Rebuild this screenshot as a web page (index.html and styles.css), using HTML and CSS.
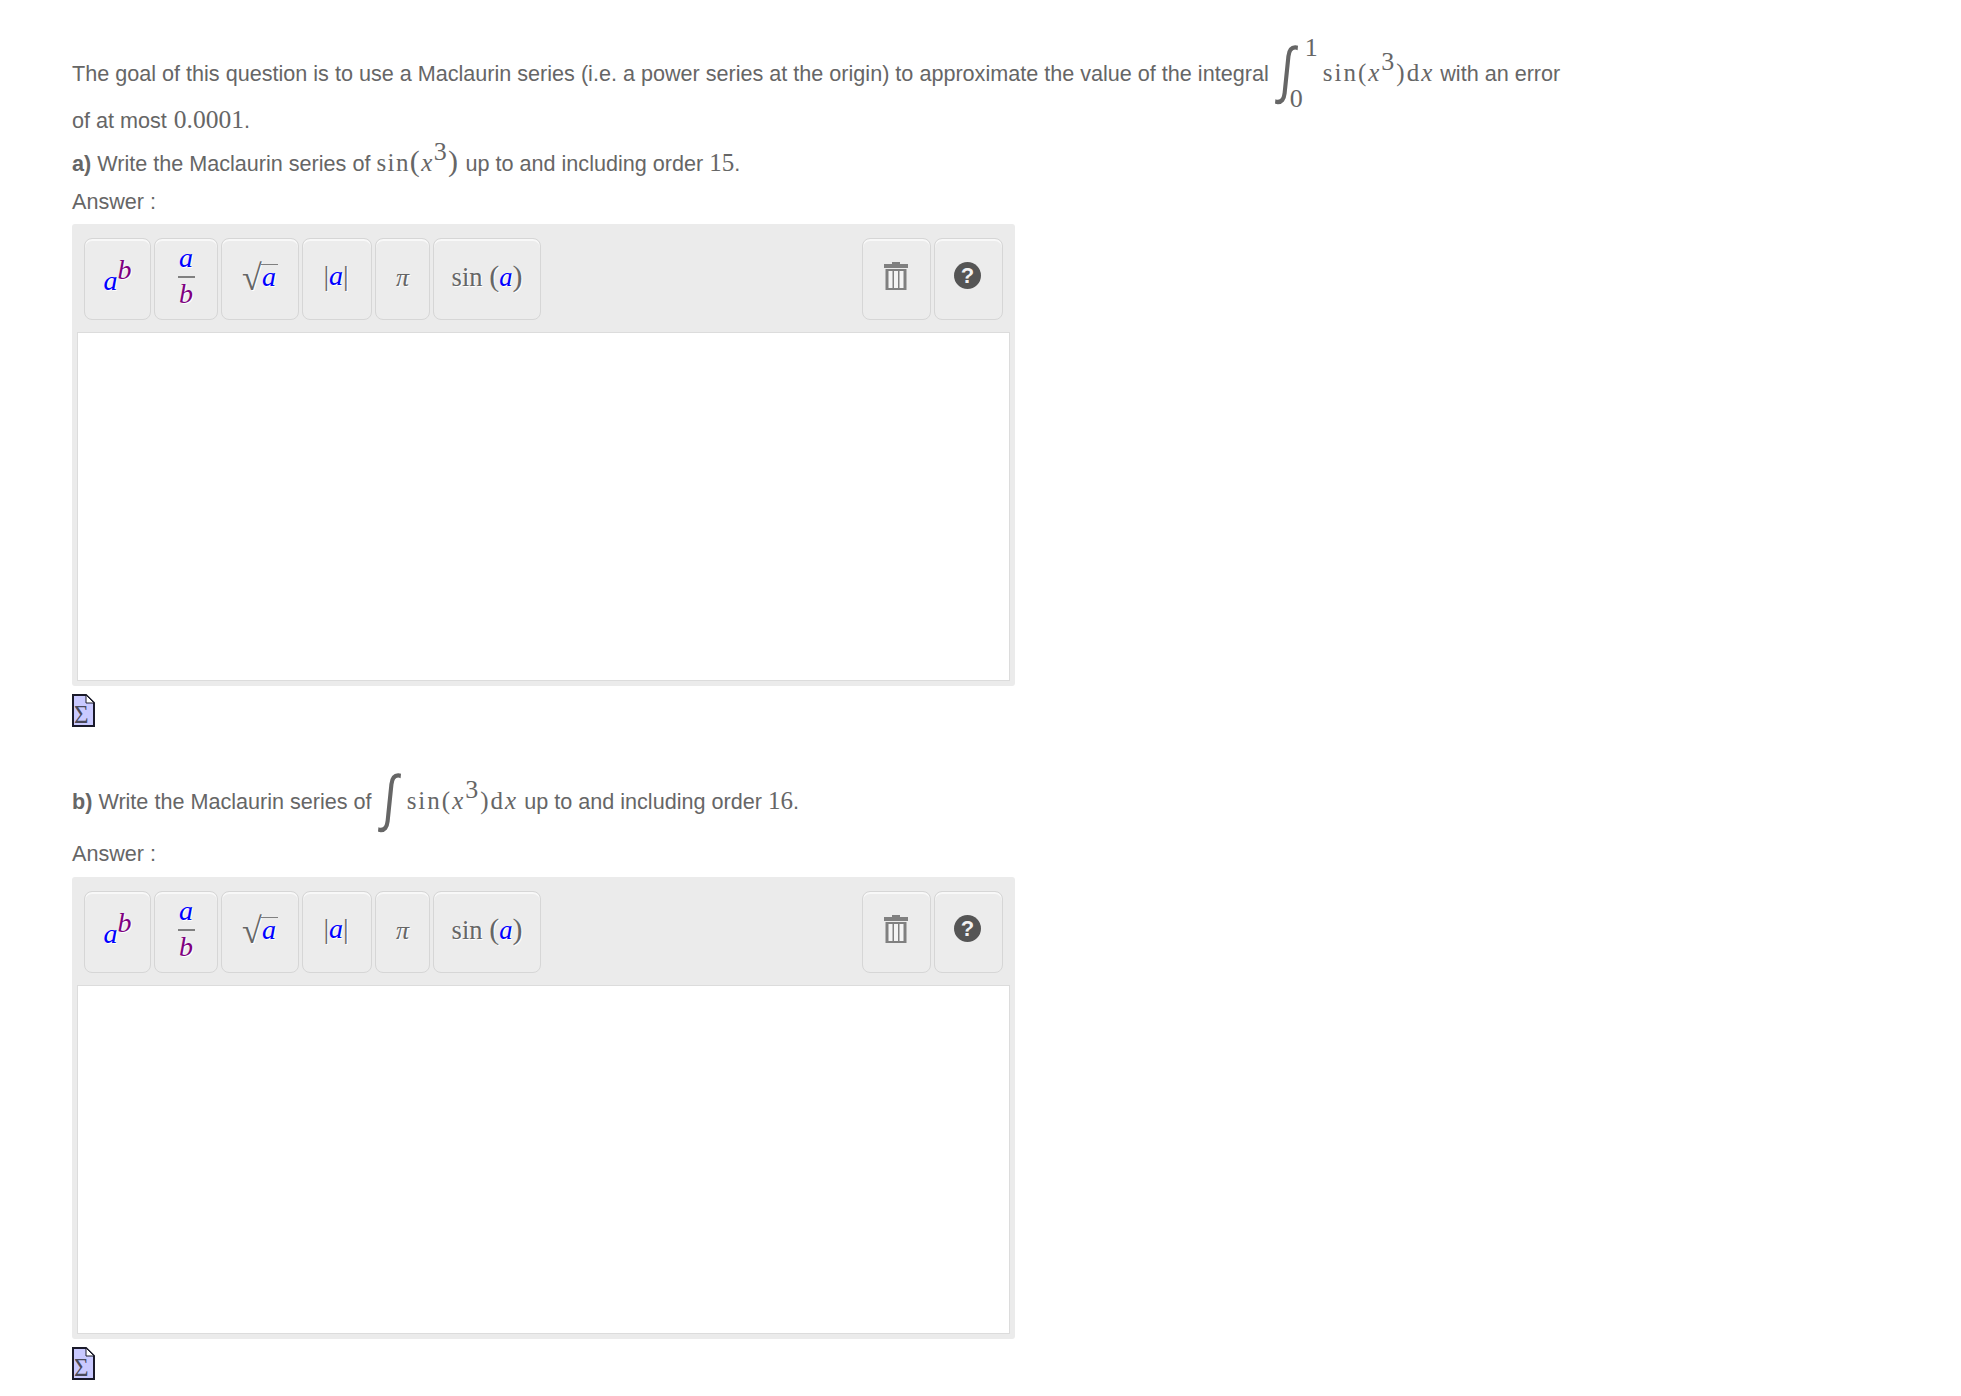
FILE: index.html
```html
<!DOCTYPE html>
<html lang="en">
<head>
<meta charset="utf-8">
<title>Maclaurin series question</title>
<link rel="stylesheet" href="styles.css">
</head>
<body>
<main class="question">
  <p class="line line-intro">The goal of this question is to use a Maclaurin series (i.e. a power series at the origin) to approximate the value of the integral <span class="def-int"><span class="int">∫</span><span class="lim lim-top">1</span><span class="lim lim-bot">0</span></span><span class="math expr">sin(<i>x</i><sup>3</sup>)d<i>x</i></span> with an error</p>
  <p class="line line-at">of at most <span class="math num">0.0001</span>.</p>
  <p class="line line-a"><b>a)</b> Write the Maclaurin series of <span class="math expr expr-a">sin<span class="paren">(</span><i>x</i><sup>3</sup><span class="paren">)</span></span> up to and including order <span class="math">15</span>.</p>
  <p class="line line-answer">Answer :</p>

  <section class="widget">
    <div class="toolbar">
      <div class="btn b-pow"><span class="m"><i class="blue">a</i><sup class="purple">b</sup></span></div>
      <div class="btn b-frac"><span class="frac"><i class="blue">a</i><span class="bar"></span><i class="purple">b</i></span></div>
      <div class="btn b-sqrt"><span class="m root"><span class="radical">√</span><i class="blue over">a</i></span></div>
      <div class="btn b-abs"><span class="m up">|<i class="blue">a</i>|</span></div>
      <div class="btn b-pi"><span class="m pi"><i>π</i></span></div>
      <div class="btn b-sin"><span class="m up">sin <span class="tall">(</span><i class="blue">a</i><span class="tall">)</span></span></div>
      <div class="btn b-trash push"><svg class="trash" viewBox="0 0 26 28" width="26" height="28"><path d="M9 0h8v2h8v4H1V2h8zM2.500 7h21v21h-21z" fill="#808080"/><path d="M5.500 9h4v17h-4zM11 9h4v17h-4zM16.500 9h4v17h-4z" fill="#f4f4f4"/></svg></div>
      <div class="btn b-help"><span class="help">?</span></div>
    </div>
    <div class="editor"></div>
  </section>
  <div class="sigma"><svg viewBox="0 0 23 33" width="23" height="33"><path d="M1 1h13l8 8v23H1z" fill="#c9c9ff" stroke="#1a1a2a" stroke-width="2"/><path d="M14 1v8h8z" fill="#fff" stroke="#1a1a2a"/><text x="2" y="29" class="sigma-text">Σ</text></svg></div>

  <p class="line line-b"><b>b)</b> Write the Maclaurin series of <span class="def-int ind"><span class="int">∫</span></span><span class="math expr">sin(<i>x</i><sup>3</sup>)d<i>x</i></span> up to and including order <span class="math">16</span>.</p>
  <p class="line line-answer2">Answer :</p>

  <section class="widget">
    <div class="toolbar">
      <div class="btn b-pow"><span class="m"><i class="blue">a</i><sup class="purple">b</sup></span></div>
      <div class="btn b-frac"><span class="frac"><i class="blue">a</i><span class="bar"></span><i class="purple">b</i></span></div>
      <div class="btn b-sqrt"><span class="m root"><span class="radical">√</span><i class="blue over">a</i></span></div>
      <div class="btn b-abs"><span class="m up">|<i class="blue">a</i>|</span></div>
      <div class="btn b-pi"><span class="m pi"><i>π</i></span></div>
      <div class="btn b-sin"><span class="m up">sin <span class="tall">(</span><i class="blue">a</i><span class="tall">)</span></span></div>
      <div class="btn b-trash push"><svg class="trash" viewBox="0 0 26 28" width="26" height="28"><path d="M9 0h8v2h8v4H1V2h8zM2.500 7h21v21h-21z" fill="#808080"/><path d="M5.500 9h4v17h-4zM11 9h4v17h-4zM16.500 9h4v17h-4z" fill="#f4f4f4"/></svg></div>
      <div class="btn b-help"><span class="help">?</span></div>
    </div>
    <div class="editor"></div>
  </section>
  <div class="sigma"><svg viewBox="0 0 23 33" width="23" height="33"><path d="M1 1h13l8 8v23H1z" fill="#c9c9ff" stroke="#1a1a2a" stroke-width="2"/><path d="M14 1v8h8z" fill="#fff" stroke="#1a1a2a"/><text x="2" y="29" class="sigma-text">Σ</text></svg></div>
</main>
</body>
</html>
```
FILE: styles.css
```css
* { box-sizing: border-box; }
html, body { margin: 0; background: #fff; }
body {
  width: 1961px;
  height: 1396px;
  overflow: hidden;
  font-family: "Liberation Sans", Arial, sans-serif;
  font-size: 21.6px;
  color: #666;
}
.question { padding: 0 0 0 72px; }
.line { margin: 0; display: block; white-space: nowrap; }
.line-intro { padding-top: 40px; height: 102px; line-height: 66px; }
.line-at { height: 46px; line-height: 36px; }
.line-a { height: 40px; line-height: 30px; }
.line-answer { height: 36px; line-height: 28px; }
.line-b { margin-top: 22px; height: 73px; line-height: 66px; }
.line-answer2 { height: 36px; line-height: 26px; }
.math { font-family: "Liberation Serif", "Times New Roman", serif; font-size: 25px; white-space: nowrap; }
.num { font-size: 25.5px; margin-left: 1px; }
.expr { letter-spacing: 2px; }
.expr-a { letter-spacing: 1.4px; }
.math sup { font-size: 26px; line-height: 0; vertical-align: 11px; }
.paren { font-size: 30px; line-height: 0; }
.def-int { display: inline-block; position: relative; width: 48px; height: 1px; vertical-align: baseline; }
.def-int.ind { width: 29px; }
.int {
  position: absolute;
  left: 0;
  top: -41px;
  width: 24px;
  text-align: center;
  font-family: "DejaVu Sans", sans-serif;
  font-weight: 200;
  font-size: 46px;
  line-height: 60px;
  transform: scaleY(1.35) skewX(-8deg);
}
.lim { position: absolute; font-family: "Liberation Serif", serif; font-size: 26px; line-height: 26px; }
.lim-top { left: 30px; top: -45px; }
.lim-bot { left: 15px; top: 6px; }
.widget {
  width: 943px;
  height: 462px;
  background: #ebebeb;
  border-radius: 3px;
  padding: 14px 5px 5px;
  display: flex;
  flex-direction: column;
}
.toolbar { display: flex; gap: 3px; height: 82px; padding: 0 7px; flex: none; }
.btn {
  height: 82px;
  border: 1px solid #d6d6d6;
  border-radius: 8px;
  background: #ececec;
  box-shadow: inset 0 2px 0 #f8f8f8;
  display: flex;
  align-items: center;
  justify-content: center;
  font-family: "Liberation Serif", "Times New Roman", serif;
  font-size: 28px;
  color: #666;
  text-shadow: 1px 1px 0 #fff;
  flex: none;
}
.b-pow { width: 67px; }
.b-frac { width: 64px; }
.b-sqrt { width: 78px; }
.b-abs { width: 70px; }
.b-pi { width: 55px; }
.b-sin { width: 108px; font-size: 26.500px; }
.b-trash { width: 69px; }
.b-help { width: 69px; }
.push { margin-left: auto; }
.blue { color: #00f; }
.purple { color: #800080; }
.m { line-height: 1; white-space: nowrap; position: relative; }
.m sup { font-size: 28px; line-height: 0; vertical-align: 11px; font-style: italic; }
.b-pow .m { top: 2px; }
.up { top: -3px; }
.b-abs .m { left: -1px; }
.tall { font-size: 30px; }
.frac { display: flex; flex-direction: column; align-items: center; line-height: 26px; font-size: 28px; position: relative; top: -3px; }
.bar { display: block; width: 17px; height: 2px; background: #808080; margin: 5px 0 3px; }
.root { top: -1px; display: inline-flex; align-items: center; }
.radical { font-size: 36px; line-height: 30px; }
.over { border-top: 1px solid #808080; padding: 0 2px 0 1px; line-height: 24px; margin-left: -1px; margin-top: -4px; }
.pi { font-size: 26px; top: -1px; }
.trash { margin: -6px 2px 0 0; }
.help {
  width: 27px;
  height: 27px;
  border-radius: 50%;
  background: #555;
  color: #f2f2f2;
  font-family: "Liberation Sans", Arial, sans-serif;
  font-weight: bold;
  font-size: 22px;
  line-height: 27px;
  text-align: center;
  text-shadow: none;
  margin: -7px 2px 0 0;
}
.editor {
  flex: 1;
  margin-top: 12px;
  background: #fff;
  border: 1px solid #dcdcdc;
}
.sigma { height: 60px; padding-top: 8px; }
.sigma svg { display: block; }
.sigma-text { font-family: "Liberation Serif", serif; font-size: 25px; fill: #4a4a5a; }
```
